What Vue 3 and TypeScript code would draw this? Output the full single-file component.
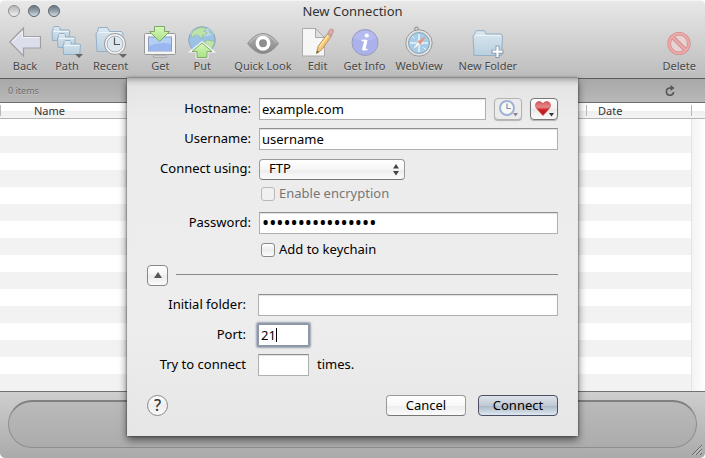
<script setup lang="ts">
import { ref } from 'vue'

interface Tool {
  icon: string
  label: string
}

const groups: Tool[][] = [
  [
    { icon: 'back', label: 'Back' },
    { icon: 'path', label: 'Path' },
    { icon: 'recent', label: 'Recent' },
  ],
  [
    { icon: 'get', label: 'Get' },
    { icon: 'put', label: 'Put' },
  ],
  [
    { icon: 'look', label: 'Quick Look' },
    { icon: 'edit', label: 'Edit' },
    { icon: 'info', label: 'Get Info' },
    { icon: 'web', label: 'WebView' },
  ],
  [{ icon: 'folder', label: 'New Folder' }],
  [{ icon: 'delete', label: 'Delete' }],
]

const hostname = ref('example.com')
const username = ref('username')
const protocol = ref('FTP')
const encryption = ref(false)
const password = ref('passwordpassword')
const keychain = ref(false)
const folder = ref('')
const port = ref('21')
const attempts = ref('')
</script>

<template>
  <div class="window">
    <header class="chrome">
      <div class="titlebar">
        <div class="lights">
          <button class="light pale" type="button" aria-label="Close"></button>
          <button class="light" type="button" aria-label="Minimize"></button>
          <button class="light" type="button" aria-label="Zoom"></button>
        </div>
        <h1 class="title">New Connection</h1>
      </div>
      <nav class="toolbar">
        <div v-for="(group, g) in groups" :key="g" class="group">
          <button v-for="tool in group" :key="tool.label" class="tool" type="button">
            <svg class="tool-icon" viewBox="0 0 32 32" width="32" height="32" aria-hidden="true">
              <defs>
                <linearGradient :id="'blue-' + tool.icon" x1="0" y1="0" x2="0" y2="1">
                  <stop offset="0" stop-color="#dbe8f1" />
                  <stop offset="1" stop-color="#b9cfde" />
                </linearGradient>
                <linearGradient :id="'green-' + tool.icon" x1="0" y1="0" x2="0" y2="1">
                  <stop offset="0" stop-color="#d8f7b8" />
                  <stop offset="1" stop-color="#a8e286" />
                </linearGradient>
                <linearGradient :id="'grey-' + tool.icon" x1="0" y1="0" x2="0" y2="1">
                  <stop offset="0" stop-color="#b4b4b4" />
                  <stop offset="1" stop-color="#848484" />
                </linearGradient>
              </defs>
              <template v-if="tool.icon === 'back'">
                <path d="M.8 16 14.500 2v8.500h17v11.500h-17v8z" fill="#dcdfeb" stroke="#a0a0a4" stroke-width="1.200" />
                <path d="M2.800 16 13.300 5.500v6h17" fill="none" stroke="#f4f5fa" />
              </template>
              <template v-else-if="tool.icon === 'path'">
                <g fill="url(#blue-path)" stroke="#95afc6">
                  <path d="M1.500 14.500 1 5l1-1V1.500l1-1h5l1 1V4h9l.7 1-.7 9.500z" />
                  <path d="M7 21.500 6.500 12l1-1V8.500l1-1h5l1 1V11h9l.7 1-.7 9.500z" />
                  <path d="M12.500 28.500 12 19l1-1v-2.500l1-1h5l1 1V18h8.500l1 1-.7 9.500z" />
                </g>
                <path d="M2.500 5.500h15.500M8 12.500h15.500M13.500 19.500h15" stroke="#edf4f8" />
                <path d="M24 28h8l-4 4z" fill="#666" />
              </template>
              <template v-else-if="tool.icon === 'recent'">
                <path d="M2 25.500 1 7l1.500-1.500 1-4h9l2 4h12L28 7l-1 18.500z" fill="url(#blue-recent)" stroke="#95afc6" />
                <path d="M3.500 6.500h22" stroke="#edf4f8" />
                <circle cx="20" cy="18" r="10.500" fill="#f5f5f5" stroke="#999" />
                <circle cx="20" cy="18" r="8" fill="#dce7ef" stroke="#aeb3b7" />
                <path d="M19.500 11.500v7h5.500" fill="none" stroke="#555" stroke-width="1.200" />
                <path d="M24 28h8l-4 4z" fill="#666" />
              </template>
              <template v-else-if="tool.icon === 'get'">
                <rect x=".5" y="7.500" width="31" height="21" rx="1" fill="#f5f5f5" stroke="#999" />
                <rect x="4.500" y="11" width="23" height="14" fill="#b4cff6" stroke="#8d9dc0" />
                <path d="M5 20q11-5 22-2v6.500H5z" fill="#9ab7f2" />
                <rect x="9.500" y="30" width="13" height="1.500" fill="#eee" stroke="#999" stroke-width=".7" />
                <path d="M10.500.5h10v5h5L15.500 15.500 5.500 5.500h5z" fill="url(#green-get)" stroke="#7fa76d" />
              </template>
              <template v-else-if="tool.icon === 'put'">
                <circle cx="16" cy="14" r="13.300" fill="#9cc2e4" stroke="#87a6bd" />
                <path d="M4 8q4-6 12-6.500T28 8Q16 13 4 8z" fill="#b9d8ef" />
                <path d="M7 5q5-4 9-3.500 4 0 4.500 2l-3 1.500 3.500 1.500-1 2-4 1 1 3-3-1-2-3-4 1-2 2-1-2zM18 16l3.500-2 6 1 1 2-3 6-4-2zM23 4l4 4-3-1z" fill="#bfe3a8" stroke="#86b491" stroke-width=".6" />
                <path d="M11 31v-6H6L16 17l10 8h-5v6z" fill="none" stroke="#fff" stroke-width="3" stroke-opacity=".8" />
                <path d="M11 31.500v-6H6L16 17l10 8.500h-5v6z" fill="url(#green-put)" stroke="#80ad6b" />
              </template>
              <template v-else-if="tool.icon === 'look'">
                <path d="M.5 17.500Q8 7.500 16 7.500t15.500 10Q24 27.500 16 27.500T.5 17.500z" fill="url(#grey-look)" stroke="#929292" />
                <path d="M2.500 17Q9 8.700 16 8.700T29.500 17" fill="none" stroke="#d0d0d0" stroke-width=".8" />
                <circle cx="16" cy="17.300" r="5.700" fill="#8d8d8d" stroke="#fff" stroke-width="3.500" />
              </template>
              <template v-else-if="tool.icon === 'edit'">
                <path d="M.5 2.500h13l9 9V30H.5z" fill="#f6f6f6" stroke="#aaa" />
                <path d="M13.500 2.500v9h9z" fill="#dedede" stroke="#aaa" />
                <path d="M14.500 27.500 16 20.500 26.500 6.500l3.500 2.700L20 23.500z" fill="#f5c476" stroke="#bd9360" />
                <path d="m17.500 21 10-13.500" stroke="#ffe6a4" stroke-width="1.300" />
                <path d="m26 6.500 2-3q1.500-1 3 .2 1 1.300 0 2.800l-1.500 2.500z" fill="#eba6a6" stroke="#ad8585" stroke-width=".7" />
                <path d="m25.300 7.700 3.700 2.800" stroke="#aaa" stroke-width="1.500" />
                <path d="m14.500 27.500.5-3 2 1.500z" fill="#555" />
              </template>
              <template v-else-if="tool.icon === 'info'">
                <circle cx="16" cy="16.500" r="13" fill="#aab1eb" stroke="#999dbd" />
                <path d="M4.500 12a12.500 12 0 0 1 23 0Q16 17 4.500 12z" fill="#b5bbf0" />
                <circle cx="17.800" cy="9.500" r="2.100" fill="#fff" />
                <path d="M12.500 14.500h4.500M14.500 23.500h4" fill="none" stroke="#fff" stroke-width="1.500" />
                <path d="m17 13.800-2.500 10.500" stroke="#fff" stroke-width="3.200" />
              </template>
              <template v-else-if="tool.icon === 'web'">
                <circle cx="13.500" cy="3" r="1.800" fill="none" stroke="#999" stroke-width="1.200" />
                <circle cx="16" cy="17" r="13.200" fill="#e3e3e3" stroke="#999" />
                <circle cx="16" cy="17" r="10.500" fill="#a5cdea" stroke="#8ba3b3" />
                <path d="m16 8 1.500 7.500 8 1.500-8 1.500L16 26l-1.500-7.500-8-1.500 8-1.500z" fill="#dfeef8" />
                <path d="M16 8v3m0 12v3M7 17h3m12 0h3M9.500 10.500l2 2m9 9 2 2" stroke="#fff" />
                <path d="M23.500 9.500 17.500 18.500l-3-3z" fill="#ec9378" />
                <path d="m8.500 24.500 6-9 3 3z" fill="#f4f4f4" stroke="#8dabc0" stroke-width=".5" />
              </template>
              <template v-else-if="tool.icon === 'folder'">
                <path d="M2 29.500 1 10l1.500-1.500 1-3 1-.8h8l1.500 3.300h15L30.500 10l-1 19.500z" fill="url(#blue-folder)" stroke="#95afc6" />
                <path d="M3 9.500h26" stroke="#edf4f8" />
                <path d="M25.500 19.500v12.500M19.500 25.700h12" stroke="#8499aa" stroke-width="4" />
                <path d="M25.500 20.500v10.500M20.500 25.700h10" stroke="#fff" stroke-width="2.200" />
              </template>
              <template v-else>
                <circle cx="16" cy="17.500" r="9.800" fill="#e6d4d4" stroke="#c98989" stroke-width="3.600" />
                <path d="m9.500 11 13 13" stroke="#c98989" stroke-width="4" />
                <circle cx="16" cy="17.500" r="9.800" fill="none" stroke="#efa6a6" stroke-width="2.300" />
                <path d="m9.300 10.800 13.400 13.400" stroke="#efa6a6" stroke-width="2.500" />
              </template>
            </svg>
            <span>{{ tool.label }}</span>
          </button>
        </div>
      </nav>
    </header>

    <main class="browser">
      <div class="status">
        <span>0 items</span>
        <button class="reload" type="button" aria-label="Reload">
          <svg viewBox="0 0 10 12" width="10" height="12" aria-hidden="true">
            <path d="M6.500 3H5a3.600 3.600 0 1 0 3.600 4" fill="none" stroke="#555" stroke-width="1.600" />
            <path d="m5.500 0 4 3-4 3z" fill="#555" />
          </svg>
        </button>
      </div>
      <table class="files">
        <thead>
          <tr>
            <th class="name" scope="col">Name</th>
            <th class="date" scope="col">Date</th>
            <th class="corner"></th>
          </tr>
        </thead>
      </table>
      <div class="rows"><div class="scroller"></div></div>
    </main>

    <footer class="bottom">
      <div class="well"></div>
      <svg class="grip" viewBox="0 0 11 11" width="11" height="11" aria-hidden="true">
        <path d="M1 11 11 1M5 11l6-6M9 11l2-2" stroke="#666" />
        <path d="M2 11.500 11.500 2M6 11.500 11.500 6" stroke="#ddd" stroke-width=".6" />
      </svg>
    </footer>

    <form class="sheet" role="dialog" aria-label="New Connection" @submit.prevent>
      <div class="row host">
        <label for="host">Hostname:</label>
        <input id="host" v-model="hostname" class="field" type="text" />
        <div class="extras">
          <button class="mini faded" type="button" aria-label="Recent connections" disabled>
            <svg viewBox="0 0 26 20" width="26" height="20" aria-hidden="true">
              <circle cx="12" cy="9" r="7" fill="#f7f7f4" stroke="#a0b3d5" stroke-width="2" />
              <path d="M12 4.500V9.500h4" fill="none" stroke="#8390a8" stroke-width="1.200" />
              <path d="M18 14h5l-2.500 3.500z" fill="#888" />
            </svg>
          </button>
          <button class="mini" type="button" aria-label="Favorites">
            <svg viewBox="0 0 26 20" width="26" height="20" aria-hidden="true">
              <defs>
                <linearGradient id="heart" x1="0" y1="0" x2="0" y2="1">
                  <stop offset="0" stop-color="#d85a5f" />
                  <stop offset=".4" stop-color="#e68888" />
                  <stop offset=".6" stop-color="#cc2026" />
                  <stop offset="1" stop-color="#bd1218" />
                </linearGradient>
              </defs>
              <path d="M12 16.500C9 13 4.500 9.500 4.500 6.500c0-5 6-5 7.500-1.500 1.500-3.500 7.500-3.500 7.500 1.500 0 3-4.500 6.500-7.500 10z" fill="url(#heart)" stroke="#bd3f44" stroke-width=".6" />
              <path d="M18 14h5l-2.500 3.500z" fill="#333" />
            </svg>
          </button>
        </div>
      </div>
      <div class="row">
        <label for="user">Username:</label>
        <input id="user" v-model="username" class="field" type="text" />
      </div>
      <div class="row">
        <label for="protocol">Connect using:</label>
        <div class="popup">
          <select id="protocol" v-model="protocol">
            <option>FTP</option>
            <option>SFTP</option>
            <option>WebDAV</option>
          </select>
          <svg viewBox="0 0 6 12" width="6" height="12" aria-hidden="true">
            <path d="m3 0 3 4.500H0zM0 7h6l-3 4.500z" fill="#444" />
          </svg>
        </div>
      </div>
      <div class="row check dim">
        <input id="encrypt" v-model="encryption" type="checkbox" disabled />
        <label for="encrypt">Enable encryption</label>
      </div>
      <div class="row">
        <label for="pass">Password:</label>
        <input id="pass" v-model="password" class="field" type="password" />
      </div>
      <div class="row check keychain">
        <input id="keychain" v-model="keychain" type="checkbox" />
        <label for="keychain">Add to keychain</label>
      </div>
      <div class="divider">
        <button class="disclose" type="button" aria-label="Hide advanced options">
          <svg viewBox="0 0 8 6" width="8" height="6" aria-hidden="true">
            <path d="m4 0 4 6H0z" fill="#555" />
          </svg>
        </button>
        <hr />
      </div>
      <div class="row lower">
        <label for="folder">Initial folder:</label>
        <input id="folder" v-model="folder" class="field" type="text" />
      </div>
      <div class="row lower">
        <label for="port">Port:</label>
        <div class="port">
          <input id="port" v-model="port" class="field short focused" type="text" />
          <span class="caret"></span>
        </div>
      </div>
      <div class="row lower">
        <label for="attempts">Try to connect</label>
        <input id="attempts" v-model="attempts" class="field short" type="text" />
        <span class="times">times.</span>
      </div>
      <div class="actions">
        <button class="help" type="button" aria-label="Help">?</button>
        <button class="push" type="button">Cancel</button>
        <button class="push primary" type="submit">Connect</button>
      </div>
    </form>
  </div>
</template>

<style>
body {
  background: #fff;
}
</style>

<style scoped>
* {
  box-sizing: border-box;
}

.window {
  position: relative;
  display: flex;
  flex-direction: column;
  height: 100vh;
  overflow: hidden;
  border-radius: 5px;
  font-family: "Noto Sans", "Open Sans", sans-serif;
  font-size: 13px;
  line-height: 16px;
  color: #000;
}

button,
input,
select {
  margin: 0;
  padding: 0;
  border: 0;
  background: none;
  font: inherit;
  color: inherit;
  outline: none;
}

.chrome {
  flex: none;
  height: 78px;
  background: linear-gradient(#e8e8e8, #d2d2d2 50%, #bcbcbc);
  border-top: 1px solid #f4f4f4;
}

.titlebar {
  display: grid;
  grid-template-columns: 1fr auto 1fr;
  align-items: center;
  height: 20px;
  padding: 0 8px;
}

.lights {
  display: flex;
  gap: 8px;
}

.light {
  width: 12px;
  height: 12px;
  border: 1px solid #59636c;
  border-radius: 50%;
  background: linear-gradient(#6d7882, #93a0aa 50%, #d2dce3);
}

.light.pale {
  border-color: #8d8d8d;
  background: linear-gradient(#b5b5b5, #d0d0d0 50%, #f2f2f2);
}

.title {
  margin: 0;
  font-size: 13px;
  font-weight: 400;
  color: #333;
}

.toolbar {
  display: flex;
  gap: 16px;
  padding: 5px 9px 0;
}

.group {
  display: flex;
  gap: 10px;
}

.group:last-child {
  margin-left: auto;
}

.tool {
  display: flex;
  flex-direction: column;
  align-items: center;
  min-width: 32px;
  font-size: 11px;
  line-height: 16px;
  white-space: nowrap;
  color: #484848;
  text-shadow: 0 1px 0 rgba(255, 255, 255, 0.4);
}

.tool-icon {
  display: block;
  overflow: visible;
}

.browser {
  flex: 1;
  display: flex;
  flex-direction: column;
  min-height: 0;
}

.status {
  display: flex;
  align-items: center;
  justify-content: space-between;
  height: 25px;
  padding: 0 30px 0 8px;
  border-top: 1px solid #5c5c5c;
  border-bottom: 1px solid #6c6c6c;
  background: linear-gradient(#a8a8a8, #b8b8b8);
  font-size: 9px;
  color: #6c6c6c;
  text-shadow: 0 1px 0 rgba(255, 255, 255, 0.3);
}

.reload svg {
  display: block;
}

.files {
  width: 100%;
  height: 16px;
  table-layout: fixed;
  border-collapse: collapse;
  border-bottom: 1px solid #b4b4b4;
  background: linear-gradient(#fff 50%, #efefef 50%, #f5f5f5);
}

.files th {
  padding: 0 0 0 12px;
  background: linear-gradient(#b8b8b8, #b8b8b8) left center / 1px 11px no-repeat;
  font-size: 11px;
  font-weight: 400;
  line-height: 15px;
  text-align: left;
  color: #333;
}

.files .name {
  padding-left: 34px;
}

.files .date {
  width: 105px;
}

.files .corner {
  width: 14px;
  padding: 0;
}

.rows {
  flex: 1;
  display: flex;
  justify-content: flex-end;
  background: repeating-linear-gradient(#fff 0 17px, #f2f2f2 17px 34px);
}

.scroller {
  width: 14px;
  border-left: 1px solid #e4e4e4;
  background: linear-gradient(90deg, #f3f3f3, #fff);
}

.bottom {
  position: relative;
  flex: none;
  height: 67px;
  padding: 8px 8px 10px;
  border-top: 1px solid #707070;
  background: linear-gradient(#cecece, #aaa);
}

.well {
  height: 48px;
  border: 1px solid #8e8e8e;
  border-top: 2px solid #808080;
  border-radius: 24px;
  background: linear-gradient(#bababa, #acacac);
}

.grip {
  position: absolute;
  right: 3px;
  bottom: 3px;
}

.sheet {
  position: absolute;
  top: 78px;
  right: 0;
  left: 0;
  width: 451px;
  margin: 0 auto;
  padding: 20px;
  background: linear-gradient(#e2e2e2, #ececec 40px, #ededed 70%, #e6e6e6);
  box-shadow: 0 4px 8px rgba(0, 0, 0, 0.55), 0 0 2px rgba(0, 0, 0, 0.6), inset 0 7px 7px -6px rgba(0, 0, 0, 0.4);
}

.row {
  display: grid;
  grid-template-columns: 104px minmax(0, 1fr);
  column-gap: 8px;
  align-items: center;
  height: 22px;
  margin-bottom: 8px;
}

.row.host {
  grid-template-columns: 104px minmax(0, 1fr) auto;
}

.row > label,
.times {
  padding-bottom: 2px;
  white-space: nowrap;
}

.row > label {
  text-align: right;
}

.field {
  width: 100%;
  height: 22px;
  padding: 0 2px;
  border: 1px solid #b0b0b0;
  border-top-color: #8e8e8e;
  background: #fff;
  box-shadow: inset 0 1px 1px rgba(0, 0, 0, 0.12);
}

.field[type="password"] {
  font-size: 19px;
}

.extras {
  display: flex;
  gap: 8px;
}

.mini {
  width: 28px;
  height: 22px;
  border: 1px solid #777;
  border-radius: 4px;
  background: linear-gradient(#fff, #f0f0f0 50%, #e9e9e9 50%, #fafafa);
  box-shadow: 0 1px 1px rgba(0, 0, 0, 0.25);
}

.mini.faded {
  border-color: #b2b2b2;
  background: #ebebeb;
}

.mini svg {
  display: block;
}

.popup {
  position: relative;
  width: 146px;
  height: 21px;
}

.popup select {
  width: 100%;
  height: 21px;
  padding: 0 20px 2px 9px;
  appearance: none;
  border: 1px solid #999;
  border-bottom-color: #777;
  border-radius: 4px;
  background: linear-gradient(#fff, #f6f6f6 50%, #ececec 50%, #fbfbfb);
}

.popup svg {
  position: absolute;
  top: 5px;
  right: 6px;
}

.row.check {
  display: flex;
  gap: 4px;
  height: 16px;
  margin: -2px 0 10px 114px;
}

.row.keychain {
  margin: 0 0 6px 114px;
}

.check input {
  width: 14px;
  height: 14px;
  appearance: none;
  border: 1px solid #8a8a8a;
  border-radius: 3px;
  background: linear-gradient(#fff, #ececec 50%, #fbfbfb);
}

.check input:checked {
  background: #7d91a8;
}

.check.dim {
  color: #777;
}

.check.dim input {
  border-color: #b9b9b9;
  background: #f0f0f0;
}

.divider {
  display: flex;
  align-items: center;
  gap: 8px;
  height: 22px;
  margin-bottom: 8px;
}

.divider hr {
  flex: 1;
  height: 1px;
  margin: 0 0 2px;
  border: 0;
  background: #888;
}

.disclose {
  display: grid;
  place-items: center;
  width: 21px;
  height: 21px;
  border: 1px solid #888;
  border-radius: 4px;
  background: linear-gradient(#fff, #f3f3f3 50%, #ebebeb 50%, #fafafa);
}

.lower {
  grid-template-columns: 99px minmax(0, 1fr);
  column-gap: 12px;
}

.lower:has(.short) {
  grid-template-columns: 99px 51px 1fr;
}

.port {
  position: relative;
}

.focused {
  display: block;
  border-color: #8d97a6;
  border-radius: 1px;
  box-shadow: 0 0 0 1px #8c98a8, 0 0 2px 2px #9ba5b3;
  caret-color: transparent;
}

.caret {
  position: absolute;
  top: 4px;
  left: 18px;
  width: 1px;
  height: 14px;
  background: #000;
}

.times {
  margin-left: -4px;
}

.actions {
  display: flex;
  align-items: center;
  gap: 12px;
  margin-top: 19px;
}

.help {
  width: 21px;
  height: 21px;
  margin-right: auto;
  border: 1px solid #888;
  border-radius: 50%;
  background: linear-gradient(#fff, #eee 50%, #fafafa);
  font-size: 16px;
  font-weight: 500;
  line-height: 19px;
  color: #333;
}

.push {
  width: 80px;
  height: 21px;
  padding-bottom: 1px;
  border: 1px solid #999;
  border-bottom-color: #777;
  border-radius: 4px;
  background: linear-gradient(#fff, #f8f8f8 50%, #ececec 50%, #fbfbfb);
}

.push.primary {
  border-color: #4c4f66;
  background: linear-gradient(#dfe4ea, #c0c9d4 50%, #a9b5c3 50%, #dde8f0);
}
</style>
